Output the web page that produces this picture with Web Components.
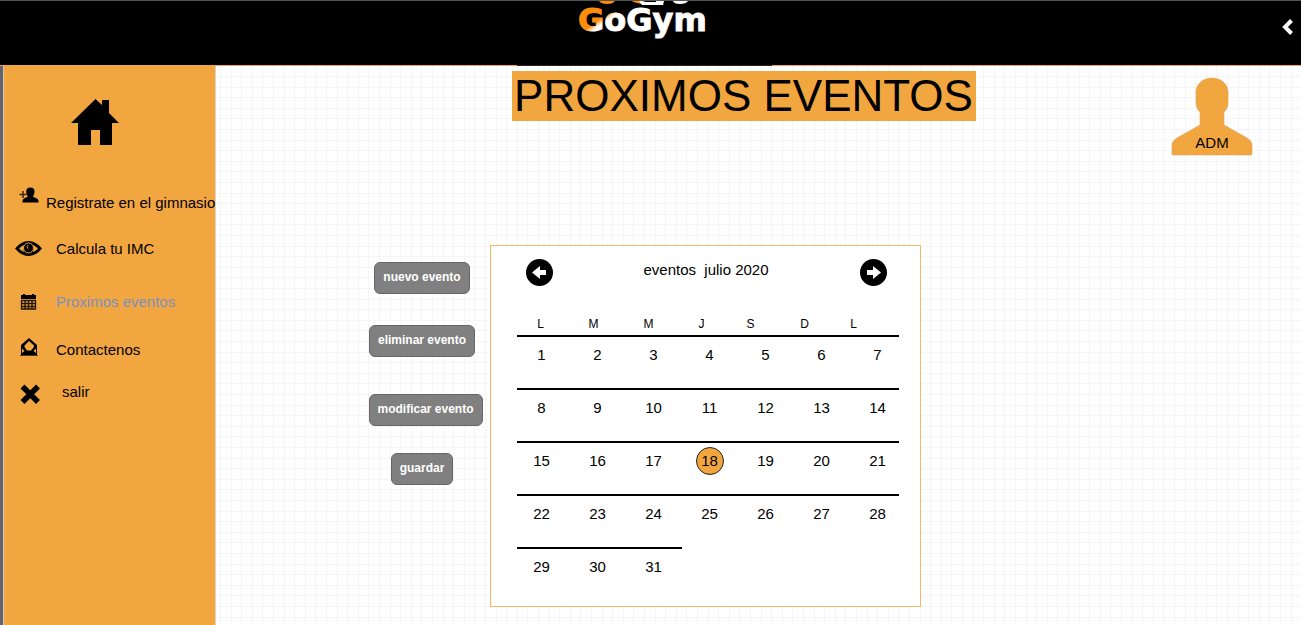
<!DOCTYPE html>
<html lang="es">
<head>
<meta charset="utf-8">
<title>GoGym - Proximos eventos</title>
<style>
  html, body { margin: 0; }
  body { font: 15px/20px "Liberation Sans", Arial, sans-serif; color: #000; background: #fff; }
</style>
</head>
<body>
<gym-app></gym-app>

<template id="t-app">
  <style>
    :host { display: flex; flex-direction: column; min-height: 100vh; }
    .body { flex: 1; display: flex; }
    main {
      flex: 1; min-width: 0;
      --line: #f5f5f5;
      background-color: #fff;
      background-image:
        linear-gradient(90deg, var(--line) 1px, transparent 1px 11px, var(--line) 11px 12px, transparent 12px 21px, var(--line) 21px 22px, transparent 22px 32px, var(--line) 32px 33px, transparent 33px 42px, var(--line) 42px 43px, transparent 43px),
        linear-gradient(var(--line) 1px, transparent 1px 11px, var(--line) 11px 12px, transparent 12px 21px, var(--line) 21px 22px, transparent 22px 32px, var(--line) 32px 33px, transparent 33px 42px, var(--line) 42px 43px, transparent 43px);
      background-size: 53px 53px;
      background-position: 4px 10px;
    }
    .top { display: grid; grid-template-columns: 1fr auto 1fr; align-items: start; padding: 5px 48px 0 19px; }
    h1 { grid-column: 2; margin: 0; padding: 0 3px 0 2px; font-size: 44px; font-weight: 400; line-height: 50px; background: #f2a640; }
    gym-user { justify-self: end; margin-top: 6px; }
    .content { display: flex; justify-content: center; align-items: flex-start; gap: 14px; padding: 89px 228px 18px 0; }
  </style>
  <gym-header></gym-header>
  <div class="body">
    <gym-nav></gym-nav>
    <main>
      <div class="top"><h1>PROXIMOS EVENTOS</h1><gym-user>ADM</gym-user></div>
      <div class="content"><gym-actions></gym-actions><gym-calendar></gym-calendar></div>
    </main>
  </div>
</template>

<template id="t-header">
  <style>
    :host { display: grid; grid-template-columns: 1fr auto 1fr; align-items: start; height: 64px; padding-right: 8px; background: #000; border-top: 1px solid #555; border-bottom: 1px solid #f2a640; position: relative; }
    :host::after { content: ""; position: absolute; left: 50%; bottom: -1px; width: 255px; height: 1px; margin-left: -134px; background: #332211; }
    .logo { grid-column: 2; display: block; }
    svg { display: block; }
    text { font: bold 32px "DejaVu Sans", sans-serif; }
    button { justify-self: end; margin: 18px 0 0; padding: 0; border: 0; background: none; cursor: pointer; }
  </style>
  <a class="logo" href="#inicio" aria-label="GoGym">
    <svg width="140" height="48" viewBox="0 0 140 48">
      <defs><linearGradient id="g" gradientUnits="userSpaceOnUse" x1="18" y1="13" x2="30" y2="29"><stop offset=".35" stop-color="#ff8c0a"/><stop offset=".6" stop-color="#fff"/></linearGradient></defs>
      <path d="M22 0h16q-2 3-8 3t-8-3z" fill="#ff8c0a"/>
      <path d="M55 0h8l3 3q-8-1-11-3z" fill="#ff8c0a"/>
      <path d="M62 0h3l4 1h10V0h8l-1 4H65z" fill="#fff"/>
      <path d="M96 0h15q-2 3-8 3t-7-3z" fill="#fff"/>
      <text x="1" y="30" fill="url(#g)" stroke="url(#g)" stroke-width="1">GoGym</text>
    </svg>
  </a>
  <button aria-label="Volver"><svg width="11" height="16" viewBox="0 0 11 16"><path d="M9.500 1.500L3 8l6.500 6.500" fill="none" stroke="#fff" stroke-width="4"/></svg></button>
</template>

<template id="t-nav">
  <style>
    :host { display: block; box-sizing: border-box; width: 216px; flex: none; background: #f2a640; border-left: 3px solid #656569; border-right: 1px solid #ddd3cc; box-shadow: inset 1px 0 #d8c4b8; }
    .home { display: block; width: 48px; margin: 33px 0 41px 68px; }
    svg { display: block; }
    nav { display: grid; grid-template-rows: 46px 53px 48px 42px 32px; align-items: start; }
  </style>
  <a class="home" href="#inicio" aria-label="Inicio"><svg width="48" height="47" viewBox="0 0 48 47"><path d="M24.500 0L31 6V1h7v13l10 10h-7v22H29V31h-9v15H7V24H0z"/></svg></a>
  <nav>
    <gym-nav-item href="#registro" style="--gap:2px">
      <svg slot="icon" width="30" height="32" viewBox="0 0 30 32"><path d="M5.500 7.500h7M9 4v7" stroke="#3a2810" stroke-width="1.500" fill="none"/><path d="M16.500 0.500q4 0 4 4 0 3-1.300 4.500v1q5.300 1.300 5.300 4v1.500H8.500V14q0-2.700 5-4V9q-1.300-1.500-1.300-4.500 0-4 4.300-4z"/></svg>Registrate en el gimnasio</gym-nav-item>
    <gym-nav-item href="#imc">
      <svg slot="icon" width="30" height="32" viewBox="0 0 30 32"><path d="M1 15.500Q7 8 14.500 8T28 15.500Q22 23 14.500 23T1 15.500z"/><path d="M5 15.500q3-3 5-3.500-1.500 3.500 0 7-2-.5-5-3.500zM24 15.500q-3-3-5-3.500 1.500 3.500 0 7 2-.5 5-3.500z" fill="#f2a640"/><circle cx="14.500" cy="15" r="5" fill="none" stroke="#f2a640"/><path d="M14.500 12q-2 1-1 3.500" stroke="#f2a640" fill="none"/></svg>Calcula tu IMC</gym-nav-item>
    <gym-nav-item href="#eventos" active>
      <svg slot="icon" width="30" height="32" viewBox="0 0 30 32"><path d="M7 9h2V8h2v1h7V8h2v1h2v4H7z"/><path d="M7.500 14.500h14v8.500h-14zM11 14v9M14.500 14v9M18 14v9M7 17.500h15M7 20.500h15" fill="none" stroke="#201604" stroke-width="1.300"/></svg>Proximos eventos</gym-nav-item>
    <gym-nav-item href="#contacto">
      <svg slot="icon" width="30" height="32" viewBox="0 0 30 32"><path d="M7 11l8-7 8 7v10.500H7z"/><path d="M10.500 11.500L15 7l5 4.500v1.500l-3 3.500h-4L10.500 13zM8 14.500l2.500 2.500L8 19zM22 14.500L19.500 17l2.500 2z" fill="#f2a640"/><path d="M6 21.500h18" stroke="#4c3615"/></svg>Contactenos</gym-nav-item>
    <gym-nav-item href="#salir" style="--gap:18px">
      <svg slot="icon" width="30" height="32" viewBox="0 0 30 32"><path d="M8.500 10.500l15.500 15.500M24 10.500L8.500 26" stroke="#000" stroke-width="5.500" fill="none"/></svg>salir</gym-nav-item>
  </nav>
</template>

<template id="t-nav-item">
  <style>
    :host { display: block; }
    a { display: flex; align-items: center; height: 32px; padding-left: 11px; gap: var(--gap, 12px); color: #000; text-decoration: none; white-space: nowrap; }
    :host([active]) a { color: #7c8fc4; }
    ::slotted(svg) { display: block; flex: none; }
  </style>
  <a><slot name="icon"></slot><span><slot></slot></span></a>
</template>

<template id="t-user">
  <style>
    :host { display: block; }
    button { display: grid; padding: 0; border: 0; background: none; color: inherit; font: inherit; cursor: pointer; }
    svg, span { grid-area: 1 / 1; display: block; }
    span { align-self: end; padding-bottom: 3px; }
  </style>
  <button>
    <svg width="82" height="79" viewBox="0 0 82 79"><path d="M41 1C51 1 57 8 57 15v10q0 7-4 10v13l23 13q5 3 5 7v9q0 1-2 1H3q-2 0-2-1v-9q0-4 5-7l23-13V35q-4-3-4-10V15C25 8 31 1 41 1z" fill="#f2a640" stroke="#dca05c" stroke-width=".6"/></svg>
    <span><slot></slot></span>
  </button>
</template>

<template id="t-button">
  <style>
    :host { display: block; }
    button { display: block; height: 32px; padding: 0 8px 2px; border: 1px solid #666; border-radius: 6px; background: #808080; color: #fff; font: bold 12px/16px "Liberation Sans", Arial, sans-serif; white-space: nowrap; cursor: pointer; }
  </style>
  <button><slot></slot></button>
</template>

<template id="t-actions">
  <style>
    :host { display: grid; grid-template-columns: 107px; grid-template-rows: 63px 69px 59px 32px; justify-items: center; align-items: start; padding-top: 17px; }
    .wide { justify-self: start; }
  </style>
  <gym-button>nuevo evento</gym-button>
  <gym-button>eliminar evento</gym-button>
  <gym-button class="wide">modificar evento</gym-button>
  <gym-button>guardar</gym-button>
</template>

<template id="t-calendar">
  <style>
    :host { display: block; box-sizing: border-box; width: 431px; padding: 13px 0 6px; border: 1px solid #f4b868; background: #fff; }
    header { display: flex; justify-content: space-between; padding: 0 33px 0 35px; }
    header button { display: block; height: 27px; padding: 0; border: 0; background: none; cursor: pointer; }
    svg { display: block; }
    h2 { margin: 0; font-size: 15px; font-weight: 400; line-height: 22px; white-space: pre; }
    table { display: block; margin: 28px 0 0 22px; }
    thead, tbody { display: block; }
    tr { display: grid; }
    th, td { padding: 0; text-align: center; }
    thead tr { grid-template-columns: 56px 50px 60px 46px 52px 56px 42px; height: 21px; }
    th { font-size: 12px; font-weight: 400; line-height: 20px; }
    tbody tr { grid-template-columns: repeat(7, 56px); height: 53px; background: linear-gradient(#000, #000) 4px 0 / 382px 2px no-repeat; }
    tbody tr:last-child { background-size: 165px 2px; }
    td { padding: 6px 0 0 2px; line-height: 28px; }
    .today { display: block; box-sizing: border-box; width: 28px; height: 28px; margin: 0 auto; border: 1px solid #222; border-radius: 50%; background: #f2a640; line-height: 26px; }
  </style>
  <header>
    <button aria-label="Mes anterior"><svg width="27" height="27" viewBox="0 0 27 27"><circle cx="13.500" cy="13.500" r="13.500"/><path d="M6 13.500L14 7v4h6v5h-6v4z" fill="#fff"/></svg></button>
    <h2>eventos  julio 2020</h2>
    <button aria-label="Mes siguiente"><svg width="27" height="27" viewBox="0 0 27 27"><circle cx="13.500" cy="13.500" r="13.500"/><path d="M21 13.500L13 7v4H7v5h6v4z" fill="#fff"/></svg></button>
  </header>
  <table>
    <thead><tr><th>L</th><th>M</th><th>M</th><th>J</th><th>S</th><th>D</th><th>L</th></tr></thead>
    <tbody></tbody>
  </table>
</template>

<script>
  const define = (name, setup) => customElements.define('gym-' + name, class extends HTMLElement {
    constructor() {
      super();
      const root = this.attachShadow({ mode: 'open' });
      root.append(document.getElementById('t-' + name).content.cloneNode(true));
      if (setup) setup(root, this);
    }
    connectedCallback() {
      const link = this.hasAttribute('href') && this.shadowRoot.querySelector('a');
      if (link) link.href = this.getAttribute('href');
    }
  });

  define('button');
  define('nav-item');
  define('user');
  define('header');
  define('nav');
  define('actions');
  define('calendar', root => {
    const body = root.querySelector('tbody');
    for (let start = 1; start <= 31; start += 7) {
      const row = body.insertRow();
      for (let day = start; day < start + 7 && day <= 31; day++) {
        const cell = row.insertCell();
        if (day === 18) {
          const mark = document.createElement('span');
          mark.className = 'today';
          mark.textContent = day;
          cell.append(mark);
        } else {
          cell.textContent = day;
        }
      }
    }
  });
  define('app');
</script>
</body>
</html>
